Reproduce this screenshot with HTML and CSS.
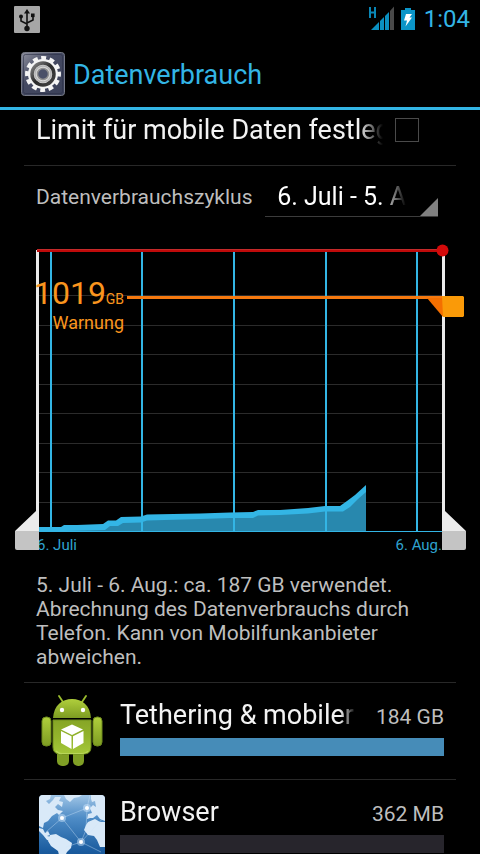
FILE: index.html
```html
<!DOCTYPE html>
<html lang="de">
<head>
    <meta charset="UTF-8">
    <meta name="viewport" content="width=device-width, initial-scale=1.0">
    <title>Datenverbrauch</title>
    <link rel="stylesheet" href="styles.css">
</head>
<body>

    <div class="status-bar">
        <svg class="usb-icon" width="26" height="27" viewBox="0 0 26 27">
            <rect width="26" height="27" rx="1" fill="#a6a6a6"/>
            <path d="M13 22V6M7 11v4l6 3M19 10v4l-6 3" fill="none" stroke="#111" stroke-width="1.6"/>
            <path d="M13 3l3 4.500h-6z" fill="#111"/>
            <circle cx="13" cy="22.500" r="2.700" fill="#111"/>
            <circle cx="7" cy="10.500" r="2" fill="#111"/>
            <rect x="17" y="7.500" width="3.600" height="3.600" fill="#111"/>
        </svg>
        <svg class="signal-icon" width="28" height="26" viewBox="0 0 28 26">
            <path d="M1 1v11M6 1v11M1 6.500h5" stroke="#0a86b5" stroke-width="2" fill="none"/>
            <path d="M2 24L10 16V24z" fill="#0b90c1"/>
            <path d="M11 15l4-4V24h-4zM16 10l4-4V24h-4z" fill="#0b90c1"/>
            <path d="M21 5l4-4.500V24h-4z" fill="#4a4a4a"/>
        </svg>
        <svg class="battery-icon" width="14" height="22" viewBox="0 0 14 22">
            <path d="M4 0h6v2h4v20H0V2h4z" fill="#0b95c8"/>
            <path d="M5 6h6L8.500 9.500H11L4.500 18.500l1.500-6H3z" fill="#fff"/>
        </svg>
        <span class="clock">1:04</span>
    </div>

    <header>
        <svg class="settings-icon" width="44" height="44" viewBox="0 0 44 44">
            <defs>
                <linearGradient id="tile" x1="0" y1="0" x2="1" y2="1">
                    <stop offset="0" stop-color="#8e909e"/>
                    <stop offset="0.4" stop-color="#454a62"/>
                    <stop offset="1" stop-color="#3a4058"/>
                </linearGradient>
                <linearGradient id="ring" x1="0" y1="0" x2="1" y2="1">
                    <stop offset="0" stop-color="#888"/>
                    <stop offset="0.5" stop-color="#2a2a2a"/>
                    <stop offset="1" stop-color="#444"/>
                </linearGradient>
            </defs>
            <rect x="0.500" y="0.500" width="43" height="43" rx="3" fill="url(#tile)" stroke="#777a86"/>
            <rect x="2.500" y="2.500" width="39" height="39" rx="2" fill="none" stroke="#2c3146" opacity="0.6"/>
            <circle cx="22" cy="22" r="16" fill="none" stroke="#f4f4f4" stroke-width="4" stroke-dasharray="4.800 3.578" transform="rotate(-8 22 22)"/>
            <circle cx="22" cy="22" r="15" fill="#f4f4f4"/>
            <circle cx="22" cy="22" r="11" fill="#d8d8d8" stroke="url(#ring)" stroke-width="3.500"/>
            <circle cx="22" cy="22" r="8" fill="none" stroke="#b5b5b5" stroke-width="1.500"/>
            <circle cx="22" cy="22" r="5.500" fill="#4a5068" stroke="#909090" stroke-width="1.500"/>
        </svg>
        <h1>Datenverbrauch</h1>
    </header>

    <main>
        <div class="limit-row">
            <label for="limit">Limit für mobile Daten festleg</label>
            <input type="checkbox" id="limit">
        </div>

        <div class="cycle-row">
            <label for="cycle">Datenverbrauchszyklus</label>
            <div class="spinner">
                <select id="cycle">
                    <option>6. Juli - 5. A</option>
                </select>
            </div>
        </div>

        <svg class="chart" viewBox="0 235 480 330">
            <!-- horizontal grid -->
            <path d="M39 295.500H442M39 325.500H442M39 354.500H442M39 384.500H442M39 413.500H442M39 443.500H442M39 472.500H442M39 502.500H442" stroke="#2b2b2b"/>

            <!-- usage -->
            <path d="M39 531V530L61 529L64 527L103 526L108 523L116 523L121 520L141 519L147 517L200 516L230 515L253 514L258 512L280 511L308 510L325 508L341 508L349 502L357 495L366 487V531z" fill="#2888ae"/>
            <path d="M39 527L61 527L64 525L77 525L103 524L108 520.500L116 520.500L121 517L141 516.500L147 514.500L200 513.500L230 512.500L253 512L258 510L280 510L308 508L325 506L340 506L347 501L355 495L366 485V492L358 499L350 507L343 511.500L325 511.500L308 513.500L280 515L258 515.500L253 518L230 518L200 519L147 520.500L141 522.500L123 523L118 526H110L105 530L64 531H39z" fill="#33b5e5"/>

            <!-- weeks -->
            <path d="M51 251V531M142 251V531M234 251V531M326 251V531M417 251V531" stroke="#33b5e5" stroke-width="2"/>
            <path d="M39 531.500H442" stroke="#33b5e5"/>
            <text class="date" x="37" y="550">6. Juli</text>
            <text class="date" x="442" y="550" text-anchor="end">6. Aug.</text>

            <!-- range handles -->
            <path d="M36 250H39V531H15L36 511z" fill="#ebebeb"/>
            <path d="M15 531H39V550H17Q15 550 15 548z" fill="#c4c4c4"/>
            <path d="M442 250H445V511L466 531H442z" fill="#ebebeb"/>
            <path d="M442 531H466V548Q466 550 464 550H442z" fill="#c4c4c4"/>

            <!-- limit -->
            <path d="M37 250.500H442" stroke="#bf0a0a" stroke-width="3"/>
            <path d="M37 249.500H442" stroke="#c52a2a"/>
            <circle cx="442.500" cy="250.500" r="6" fill="#d40a0a"/>

            <!-- warning -->
            <path d="M127 297.500H443" stroke="#f6790f" stroke-width="3"/>
            <path d="M427 298H443V317z" fill="#f46f00"/>
            <path d="M442 296H463L464 297V316L463 317H443z" fill="#fa9a08"/>
            <text class="warn-value" x="106" y="304" text-anchor="end">1019</text>
            <text class="warn-unit" x="124" y="304" text-anchor="end">GB</text>
            <text class="warn-label" x="124" y="329" text-anchor="end">Warnung</text>
        </svg>

        <p class="summary">5. Juli - 6. Aug.: ca. 187 GB verwendet. Abrechnung des Datenverbrauchs durch Telefon. Kann von Mobilfunkanbieter abweichen.</p>

        <ul class="apps">
            <li>
                <svg class="app-icon" width="72" height="72" viewBox="0 0 72 72">
                    <defs>
                        <linearGradient id="droid" x1="0" y1="0" x2="0" y2="1">
                            <stop offset="0" stop-color="#b0cf3c"/>
                            <stop offset="1" stop-color="#7d9c22"/>
                        </linearGradient>
                        <linearGradient id="body" x1="0" y1="0" x2="0" y2="1">
                            <stop offset="0" stop-color="#86a526"/>
                            <stop offset="0.5" stop-color="#93b42c"/>
                            <stop offset="1" stop-color="#a5c83a"/>
                        </linearGradient>
                    </defs>
                    <path d="M23 1l4 6M50 1l-4 6" stroke="#9bbd2e" stroke-width="1.800" stroke-linecap="round"/>
                    <rect x="21" y="52" width="12" height="19" rx="5" fill="#809f25"/>
                    <rect x="37" y="52" width="11" height="19" rx="5" fill="#809f25"/>
                    <rect x="6" y="22" width="9" height="29" rx="4" fill="url(#droid)" stroke="#6d8a1c"/>
                    <rect x="57" y="22" width="9" height="29" rx="4" fill="url(#droid)" stroke="#6d8a1c"/>
                    <path d="M17 23C18 10 26 4 36 4s18 6 19 19z" fill="url(#droid)"/>
                    <path d="M17 25h38v27q0 7-7 7H24q-7 0-7-7z" fill="url(#body)" stroke="#6f8d1d"/>
                    <path d="M20 56q3 3 6 2.500h20q4 0 6-2.500" fill="none" stroke="#b9d75a" stroke-width="1.200"/>
                    <circle cx="26" cy="15" r="2.200" fill="#fff"/>
                    <circle cx="47" cy="15" r="2.200" fill="#fff"/>
                    <path d="M36 29.500l11 5-11 5.500-11-5.500z" fill="#fff"/>
                    <path d="M25 36l10.500 5.300V54L25 48z" fill="#fff"/>
                    <path d="M47.500 36L37 41.300V54l10.500-6z" fill="#fff"/>
                </svg>
                <div class="app-info">
                    <div class="app-line">
                        <label class="app-name" for="tethering">Tethering &amp; mobiler</label>
                        <span class="app-size">184 GB</span>
                    </div>
                    <progress id="tethering" value="100" max="100"></progress>
                </div>
            </li>
            <li>
                <svg class="app-icon" width="72" height="72" viewBox="0 0 72 72">
                    <defs>
                        <linearGradient id="sea" x1="0" y1="0" x2="0" y2="1">
                            <stop offset="0" stop-color="#a0c5e6"/>
                            <stop offset="0.35" stop-color="#4e8cc6"/>
                            <stop offset="0.85" stop-color="#1a5c9f"/>
                            <stop offset="1" stop-color="#164f8c"/>
                        </linearGradient>
                        <clipPath id="globe"><rect x="3" y="3" width="66" height="66" rx="4"/></clipPath>
                    </defs>
                    <g clip-path="url(#globe)">
                        <rect x="3" y="3" width="66" height="66" fill="url(#sea)"/>
                        <g fill="#d9e9f8">
                            <path d="M3 3h12l-1 4-4 2 3 3 4-4 2-3h6l-2 4 4 1-1 5-4-3-3 3 3 3 5 1-4 4-2-2-5 3-4 5-4 2-1 5-4-2z"/>
                            <path d="M28 3h18l-3 2-5 1-4 4-4-3z"/>
                            <path d="M55 3h14v26l-5-2-3-4-4 3-3 0-3 1 1-5 4-1-2-5 3-3 3 2-1-6-3 1-1-3z"/>
                            <path d="M52 30l7-3 5 3 5 0v25l-5 0-3-7-3-4-6-1-4-5 2-5z"/>
                            <path d="M3 36l4 1 2 4 3-2 2 4-3 1 5 1-1 4-4-1-4-5-4-4z"/>
                            <path d="M14 43l6-1 5 3 5 2 6 4-1 5-4 4-3 6-4 1-2-8-7-5-3-5z"/>
                        </g>
                        <path d="M26 26L51 16M26 26L45 50M26 26L10 40M45 50L69 24M51 16L54 3M51 16L50 38L45 50L30 55M45 50L65 60" fill="none" stroke="#cfe6fa" stroke-width="1" opacity="0.4"/>
                        <g fill="#d8ecff" opacity="0.45">
                            <circle cx="26" cy="26" r="4"/>
                            <circle cx="51" cy="16" r="4"/>
                            <circle cx="45" cy="50" r="4"/>
                        </g>
                        <g fill="#fff">
                            <circle cx="26" cy="26" r="2"/>
                            <circle cx="51" cy="16" r="2"/>
                            <circle cx="45" cy="50" r="2"/>
                        </g>
                    </g>
                </svg>
                <div class="app-info">
                    <div class="app-line">
                        <label class="app-name" for="browser">Browser</label>
                        <span class="app-size">362 MB</span>
                    </div>
                    <progress id="browser" value="0" max="100"></progress>
                </div>
            </li>
        </ul>
    </main>

</body>
</html>
```
FILE: styles.css
```css
/* General body styling */
* {
    box-sizing: border-box;
}

body {
    margin: 0;
    height: 100vh;
    display: flex;
    flex-direction: column;
    overflow: hidden;
    background-color: #000;
    color: #f3f3f3;
    font-family: Roboto, "Liberation Sans", sans-serif;
    font-size: 21px;
}

/* Status bar */
.status-bar {
    display: flex;
    align-items: center;
    height: 38px;
    padding: 0 10px 0 14px;
    flex-shrink: 0;
}

.usb-icon {
    margin-right: auto;
}

.battery-icon {
    margin: 0 9px 0 4px;
}

.clock {
    color: #33b5e5;
    font-size: 24px;
}

/* Header styling */
header {
    display: flex;
    align-items: center;
    gap: 8px;
    height: 72px;
    padding: 2px 21px 0;
    border-bottom: 3px solid #33b5e5;
    flex-shrink: 0;
}

h1 {
    margin: 0;
    padding-top: 2px;
    color: #33b5e5;
    font-size: 27px;
    font-weight: 400;
}

main {
    flex: 1;
    overflow: hidden;
}

/* Limit checkbox */
.limit-row {
    display: flex;
    align-items: center;
    gap: 12px;
    margin: 0 24px;
    padding: 4px 37px 19px 12px;
    border-bottom: 1px solid #282828;
}

.limit-row label {
    flex: 1;
    overflow: hidden;
    white-space: nowrap;
    font-size: 27px;
    line-height: 32px;
    mask-image: linear-gradient(to left, transparent, #000 24px);
}

input[type="checkbox"] {
    appearance: none;
    width: 24px;
    height: 24px;
    margin: 0;
    border: 1px solid #4a4a4a;
}

/* Cycle drop-down */
.cycle-row {
    display: flex;
    align-items: center;
    justify-content: space-between;
    padding: 11px 42px 18px 36px;
    color: #bebebe;
}

.spinner {
    position: relative;
    width: 43%;
    height: 40px;
    padding: 0 32px 0 12px;
    border-bottom: 1px solid #3c3c3c;
}

.spinner::after {
    content: "";
    position: absolute;
    right: 0;
    bottom: 0;
    border-left: 18px solid transparent;
    border-bottom: 18px solid #808080;
}

select {
    appearance: none;
    width: 100%;
    height: 38px;
    padding: 0;
    border: none;
    background: none;
    color: #fff;
    font-family: inherit;
    font-size: 25px;
    mask-image: linear-gradient(to left, transparent, #000 24px);
}

/* Chart */
.chart {
    display: block;
    width: 100%;
    height: auto;
}

.date {
    fill: #2fa3cf;
    font-size: 15px;
}

.warn-value,
.warn-unit,
.warn-label {
    fill: #fa951e;
}

.warn-value {
    font-size: 32px;
}

.warn-unit {
    font-size: 14px;
}

.warn-label {
    font-size: 18px;
}

.summary {
    margin: 0 24px;
    padding: 8px 12px 13px;
    color: #bebebe;
    line-height: 24px;
}

/* App list */
.apps {
    list-style: none;
    margin: 0 24px;
    padding: 0;
}

.apps li {
    display: flex;
    gap: 12px;
    height: 97px;
    padding: 12px;
    border-top: 1px solid #282828;
}

.app-icon {
    flex-shrink: 0;
}

.app-info {
    flex: 1;
    min-width: 0;
}

.app-line {
    display: flex;
    align-items: baseline;
    gap: 20px;
    padding-top: 4px;
}

.app-name {
    flex: 1;
    overflow: hidden;
    white-space: nowrap;
    font-size: 27px;
    line-height: 32px;
    mask-image: linear-gradient(to left, transparent, #000 16px);
}

.app-size {
    color: #bebebe;
}

progress {
    appearance: none;
    display: block;
    width: 100%;
    height: 18px;
    margin-top: 7px;
    border: none;
}

progress::-webkit-progress-bar {
    background-color: #27252c;
}

progress::-webkit-progress-value {
    background-color: #468cb8;
}
```
